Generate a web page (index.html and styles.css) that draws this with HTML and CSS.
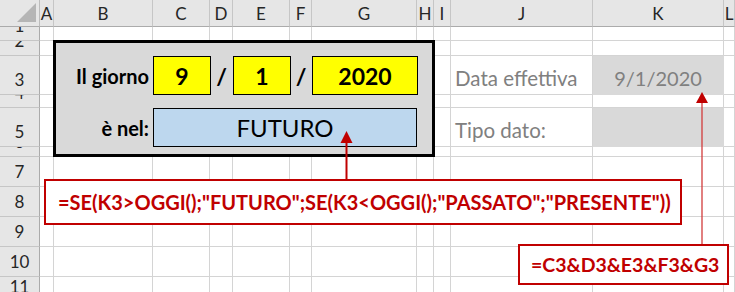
FILE: index.html
```html
<!DOCTYPE html>
<html lang="it">
<head>
<meta charset="utf-8">
<title>SE OGGI</title>
<link rel="stylesheet" href="styles.css">
</head>
<body>
<div class="sheet">
  <div class="grid">
    <div class="corner"><span class="tri"></span></div>
    <div class="ch">A</div><div class="ch">B</div><div class="ch">C</div><div class="ch">D</div><div class="ch">E</div><div class="ch">F</div><div class="ch">G</div><div class="ch">H</div><div class="ch">I</div><div class="ch">J</div><div class="ch">K</div><div class="ch">L</div>

    <div class="rh">1</div><div class="c"></div><div class="c"></div><div class="c"></div><div class="c"></div><div class="c"></div><div class="c"></div><div class="c"></div><div class="c"></div><div class="c"></div><div class="c"></div><div class="c"></div><div class="c"></div>
    <div class="rh">2</div><div class="c"></div><div class="c"></div><div class="c"></div><div class="c"></div><div class="c"></div><div class="c"></div><div class="c"></div><div class="c"></div><div class="c"></div><div class="c"></div><div class="c"></div><div class="c"></div>
    <div class="rh">3</div><div class="c"></div><div class="c"></div><div class="c"></div><div class="c"></div><div class="c"></div><div class="c"></div><div class="c"></div><div class="c"></div><div class="c"></div><div class="c lbl">Data effettiva</div><div class="c fill val">9/1/2020</div><div class="c"></div>
    <div class="rh">4</div><div class="c"></div><div class="c"></div><div class="c"></div><div class="c"></div><div class="c"></div><div class="c"></div><div class="c"></div><div class="c"></div><div class="c"></div><div class="c"></div><div class="c"></div><div class="c"></div>
    <div class="rh">5</div><div class="c"></div><div class="c"></div><div class="c"></div><div class="c"></div><div class="c"></div><div class="c"></div><div class="c"></div><div class="c"></div><div class="c"></div><div class="c lbl">Tipo dato:</div><div class="c fill"></div><div class="c"></div>
    <div class="rh">6</div><div class="c"></div><div class="c"></div><div class="c"></div><div class="c"></div><div class="c"></div><div class="c"></div><div class="c"></div><div class="c"></div><div class="c"></div><div class="c"></div><div class="c"></div><div class="c"></div>
    <div class="rh">7</div><div class="c"></div><div class="c"></div><div class="c"></div><div class="c"></div><div class="c"></div><div class="c"></div><div class="c"></div><div class="c"></div><div class="c"></div><div class="c"></div><div class="c"></div><div class="c"></div>
    <div class="rh">8</div><div class="c"></div><div class="c"></div><div class="c"></div><div class="c"></div><div class="c"></div><div class="c"></div><div class="c"></div><div class="c"></div><div class="c"></div><div class="c"></div><div class="c"></div><div class="c"></div>
    <div class="rh">9</div><div class="c"></div><div class="c"></div><div class="c"></div><div class="c"></div><div class="c"></div><div class="c"></div><div class="c"></div><div class="c"></div><div class="c"></div><div class="c"></div><div class="c"></div><div class="c"></div>
    <div class="rh">10</div><div class="c"></div><div class="c"></div><div class="c"></div><div class="c"></div><div class="c"></div><div class="c"></div><div class="c"></div><div class="c"></div><div class="c"></div><div class="c"></div><div class="c"></div><div class="c"></div>
    <div class="rh">11</div><div class="c"></div><div class="c"></div><div class="c"></div><div class="c"></div><div class="c"></div><div class="c"></div><div class="c"></div><div class="c"></div><div class="c"></div><div class="c"></div><div class="c"></div><div class="c"></div>
  </div>

  <div class="layer">
    <div class="panel"></div>
    <div class="plabel day-label">Il giorno</div>
    <div class="ybox c-day">9</div>
    <div class="slash s1">/</div>
    <div class="ybox c-month">1</div>
    <div class="slash s2">/</div>
    <div class="ybox c-year">2020</div>
    <div class="plabel in-label">è nel:</div>
    <div class="result">FUTURO</div>
  </div>

  <svg class="arrows" width="735" height="292" viewBox="0 0 735 292">
    <line x1="346.5" y1="142" x2="346.5" y2="180" stroke="#c00000" stroke-width="2"/>
    <polygon points="346.5,131 340.5,143 352.5,143" fill="#c00000"/>
    <line x1="702" y1="102" x2="702" y2="245" stroke="#d23b3b" stroke-width="1.3"/>
    <polygon points="702,92 696,103 708,103" fill="#c00000"/>
  </svg>

  <div class="callout f1">=SE(K3&gt;OGGI();"FUTURO";SE(K3&lt;OGGI();"PASSATO";"PRESENTE"))</div>
  <div class="callout f2">=C3&amp;D3&amp;E3&amp;F3&amp;G3</div>
</div>
</body>
</html>
```

FILE: styles.css
```css
html, body {
  margin: 0;
  padding: 0;
  background: #ffffff;
}

.sheet {
  position: relative;
  width: 735px;
  height: 292px;
  overflow: hidden;
  font-family: Lato, "Open Sans", sans-serif;
}

.grid,
.layer {
  display: grid;
  grid-template-columns: 40px 14px 99px 57px 23px 57px 22px 105px 17px 17px 142px 131px 11px;
  grid-template-rows: 27px 14px 15px 39px 13px 39px 10px 30px 30px 30px 30px;
}

.layer {
  position: absolute;
  left: 0;
  top: 0;
}

/* headers */
.corner {
  position: relative;
  background: #e6e6e6;
  border-right: 1px solid #bcbcbc;
  border-bottom: 1px solid #ababab;
  box-sizing: border-box;
}

.tri {
  position: absolute;
  right: 3px;
  bottom: 4px;
  width: 0;
  height: 0;
  border-left: 19px solid transparent;
  border-bottom: 19px solid #b5b5b5;
}

.ch {
  background: #e6e6e6;
  border-right: 1px solid #c6c6c6;
  border-bottom: 1px solid #ababab;
  box-sizing: border-box;
  display: flex;
  align-items: center;
  justify-content: center;
  font-size: 17px;
  color: #262626;
  overflow: hidden;
}

.rh {
  background: #e6e6e6;
  border-bottom: 1px solid #c6c6c6;
  border-right: 1px solid #ababab;
  box-sizing: border-box;
  display: flex;
  align-items: flex-end;
  justify-content: center;
  padding-bottom: 4px;
  font-size: 17px;
  line-height: 20px;
  color: #262626;
  overflow: hidden;
}

.c {
  border-right: 1px solid #d4d4d4;
  border-bottom: 1px solid #d4d4d4;
  box-sizing: border-box;
  min-width: 0;
  overflow: visible;
}

.lbl,
.val {
  display: flex;
  align-items: flex-end;
  padding-bottom: 4px;
  font-size: 20px;
  color: #808080;
  white-space: nowrap;
}

.lbl {
  padding-left: 4px;
  font-size: 20.5px;
}

.val {
  justify-content: center;
}

.fill {
  background: #d9d9d9;
  border-color: #d9d9d9;
}

/* framed panel */
.panel {
  grid-column: 3 / 10;
  grid-row: 3 / 8;
  margin: -1px -1px 0 -1px;
  border: 3px solid #000000;
  background: #d9d9d9;
}

.plabel {
  grid-column: 3;
  display: flex;
  align-items: center;
  justify-content: flex-end;
  padding-right: 4px;
  font-size: 20px;
  font-weight: 700;
  color: #000000;
  white-space: nowrap;
}

.day-label { grid-row: 4; }
.in-label { grid-row: 6; }

.ybox {
  grid-row: 4;
  margin-right: -1px;
  border: 1px solid #000000;
  background: #ffff00;
  display: flex;
  align-items: center;
  justify-content: center;
  font-size: 23px;
  font-weight: 700;
  color: #000000;
}

.c-day { grid-column: 4; }
.c-month { grid-column: 6; }
.c-year { grid-column: 8; }

.slash {
  grid-row: 4;
  display: flex;
  align-items: center;
  justify-content: center;
  font-size: 23px;
  font-weight: 700;
  color: #000000;
}

.s1 { grid-column: 5; }
.s2 { grid-column: 7; }

.result {
  grid-column: 4 / 9;
  grid-row: 6;
  border: 1px solid #000000;
  background: #bdd7ee;
  display: flex;
  align-items: center;
  justify-content: center;
  font-size: 24px;
  color: #000000;
}

/* annotations */
.arrows {
  position: absolute;
  left: 0;
  top: 0;
}

.callout {
  position: absolute;
  box-sizing: border-box;
  border: 2px solid #c00000;
  background: #ffffff;
  color: #c00000;
  font-weight: 700;
  display: flex;
  align-items: center;
  white-space: nowrap;
}

.f1 {
  left: 44px;
  top: 179px;
  width: 638px;
  height: 46px;
  padding-left: 12px;
  font-size: 20px;
}

.f2 {
  left: 518px;
  top: 244px;
  width: 211px;
  height: 41px;
  padding-left: 11px;
  font-size: 19.5px;
}
```
